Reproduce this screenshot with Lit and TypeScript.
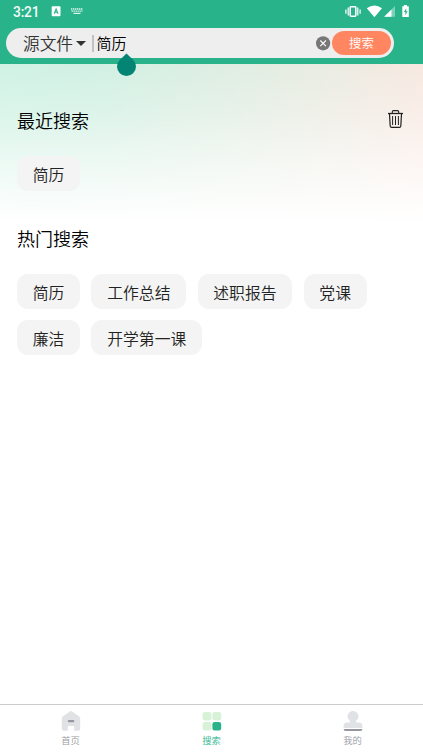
import { LitElement, html, css } from "lit";
import { customElement, property } from "lit/decorators.js";

@customElement("tag-list")
class TagList extends LitElement {
  @property({ attribute: false }) items: string[] = [];

  static styles = css`
    :host { display: flex; flex-wrap: wrap; gap: 11px 11.25px; }
    .tag {
      height: 35px; line-height: 37px; padding: 0 15.8px; border-radius: 11px;
      background: #f4f4f4; color: #222; font-size: 15.8px; white-space: nowrap;
    }
  `;

  render() {
    return html`${this.items.map((t) => html`<div class="tag">${t}</div>`)}`;
  }
}

@customElement("app-root")
class AppRoot extends LitElement {
  static styles = css`
    :host {
      display: flex; flex-direction: column; box-sizing: border-box;
      width: 100%; height: 752px; overflow: hidden; background: #fff; color: #000;
      font-family: "Noto Sans CJK SC", sans-serif; font-weight: 350;
    }
    svg { display: block; flex: none; }
    .top { height: 64px; flex: none; background: #29b38a; }
    .status { height: 28px; display: flex; padding: 0 0 0 13px; box-sizing: border-box; }
    .time { font: 500 13.8px/24px Roboto, sans-serif; color: #f2fbf8; width: 38px; letter-spacing: -0.2px; }
    .grow { flex: 1; }
    .bar {
      position: relative; box-sizing: border-box; width: 388px; height: 30px;
      margin-left: 6px; border-radius: 15px; background: #eee;
      display: flex; align-items: center; padding: 0 3px 0 17px;
    }
    .kind { font-size: 16.7px; line-height: 30px; color: #333; width: 53px; white-space: nowrap; }
    .sep { width: 1.5px; height: 17px; background: #c2c2c2; margin: 1px 3px 0 6px; }
    .query { font-size: 15px; line-height: 30px; flex: 1; }
    .go {
      width: 59px; height: 24px; border-radius: 12px; background: #ff8661; color: #fff;
      font-size: 12.4px; line-height: 24px; text-align: center; margin-left: 1px;
    }
    .handle { position: absolute; left: 110px; top: 25px; }
    .body {
      flex: 1; padding: 0 17px;
      background:
        linear-gradient(to bottom, rgba(255,255,255,0) 0, rgba(255,255,255,.25) 50px, rgba(255,255,255,.65) 105px, #fff 158px),
        linear-gradient(102deg, #cff2e4 0%, #d2f0e3 25%, #e9ece2 70%, #f9e8e1 97%);
      background-size: 100% 100%, 100% 159px;
      background-repeat: no-repeat;
    }
    .head { display: flex; justify-content: space-between; align-items: center; height: 28px; font-size: 18px; line-height: 28px; }
    .head svg { margin-bottom: 2px; }
    .recent { padding: 42px 0 22px; }
    .hot { padding: 33px 0 22px; }
    .tabs {
      height: 48px; box-sizing: border-box; flex: none; display: grid;
      grid-template-columns: repeat(3, 1fr); border-top: 1px solid #ccc; background: #fff;
    }
    .tab { display: flex; flex-direction: column; align-items: center; padding-top: 5px; font-size: 9.3px; line-height: 14px; color: #9698a0; }
    .tab svg { margin-bottom: 1px; }
    .active { color: #29b38a; }
  `;

  render() {
    return html`
      <div class="top">
        <div class="status">
          <div class="time">3:21</div>
          <svg width="40" height="24" viewBox="0 0 40 24">
            <rect x=".7" y="6.3" width="8.8" height="10" rx="1" fill="#fff" />
            <path d="M3.2 13.8 5.1 9l1.9 4.8M4 12.3h2.3" fill="none" stroke="#29b38a" stroke-width="1.1" />
            <path d="M20 9h11.5M20.5 11.1h11" stroke="#e0f5ee" stroke-width="1.4" stroke-dasharray="1.4 .6" />
            <path d="M22.5 13.4h7" stroke="#e0f5ee" stroke-width="1.2" />
          </svg>
          <div class="grow"></div>
          <svg width="80" height="24" viewBox="343 0 80 24" fill="#fff">
            <rect x="350.2" y="6.7" width="5.6" height="9.6" rx=".7" fill="none" stroke="#fff" stroke-width="1.5" />
            <path d="M348.2 7.5v8M345.9 9.5v4.2M357.8 7.5v8M360.1 9.5v4.2" stroke="#fff" stroke-width="1.2" />
            <path d="M366.8 8.2Q374.3 2.8 382 8.2L374.4 17.3Z" />
            <path d="M384.2 16.8 395 6v10.8Z" opacity=".4" />
            <path d="M384.2 16.8 391.5 9.5v7.3Z" />
            <path d="M402.3 6.3h1.6V5h3v1.3h1.9v10.8h-6.5Z" />
            <path d="m406.2 8.2-2.3 3.9h1.5v3.1l2.2-4h-1.4Z" fill="#29b38a" />
          </svg>
        </div>
        <div class="bar">
          <div class="kind">源文件</div>
          <svg width="10" height="6" viewBox="0 0 10 6"><path d="M0 1h10L5 6Z" fill="#333" /></svg>
          <div class="sep"></div>
          <div class="query">简历</div>
          <svg width="15" height="15" viewBox="0 0 15 15">
            <circle cx="7.1" cy="7.3" r="7.1" fill="#777" />
            <path d="m4.3 4.5 5.6 5.6m0-5.6-5.6 5.6" stroke="#fff" stroke-width="1.1" />
          </svg>
          <div class="go">搜索</div>
          <svg class="handle" width="21" height="24" viewBox="0 0 21 24">
            <path d="M10.5.4 17.3 6.9A9.5 9.5 0 1 1 3.7 6.9Z" fill="#048574" />
          </svg>
        </div>
      </div>
      <div class="body">
        <div class="head recent">
          <span>最近搜索</span>
          <svg width="21" height="22" viewBox="385 108 21 22" fill="none" stroke="#222">
            <path d="M388 113.5h15" stroke-width="1.3" />
            <path d="M392.3 113v-1.2q0-1.2 1.2-1.2h4q1.2 0 1.2 1.2v1.2" stroke-width="1.1" />
            <path d="M389.5 114l.7 12q.1 1.4 1.5 1.4h7.6q1.4 0 1.5-1.4l.7-12" stroke-width="1.2" />
            <path d="M392.6 116v9M395.5 116v9M398.4 116v9" stroke-width="1" />
          </svg>
        </div>
        <tag-list .items=${["简历"]}></tag-list>
        <div class="head hot"><span>热门搜索</span></div>
        <tag-list .items=${["简历", "工作总结", "述职报告", "党课", "廉洁", "开学第一课"]}></tag-list>
      </div>
      <div class="tabs">
        <div class="tab">
          <svg width="20" height="22" viewBox="0 0 20 22">
            <path d="M8.8 1.4q1.2-.8 2.4 0l7 5q1 .8 1 2v10.2q0 2.2-2 2.2h-3.9v-3.5q0-1.3-1.3-1.3h-4q-1.3 0-1.3 1.3v3.5H2.8q-2 0-2-2.2V8.4q0-1.2 1-2Z" fill="#e1e2e6" />
            <rect x="6.8" y="10" width="6.5" height="2.2" rx="1" fill="#9496a0" />
          </svg>
          首页
        </div>
        <div class="tab active">
          <svg width="20" height="22" viewBox="0 0 20 22">
            <g fill="#d8f2d8">
              <rect x=".6" y="2" width="8.8" height="8.6" rx="2.3" />
              <rect x="10.4" y="2" width="8.8" height="8.6" rx="2.3" />
              <rect x=".6" y="12" width="8.8" height="8.6" rx="2.3" />
            </g>
            <rect x="10.4" y="12" width="8.8" height="8.6" rx="2.3" fill="#29b38a" />
          </svg>
          搜索
        </div>
        <div class="tab">
          <svg width="20" height="22" viewBox="0 0 20 22">
            <path d="M10 1a5.4 5.4 0 0 1 3 9.9q-.6 1.6 1.2 1.6h2q3.2 0 3.2 4v1.4H.6v-1.4q0-4 3.2-4h2q1.8 0 1.2-1.6A5.4 5.4 0 0 1 10 1Z" fill="#e1e2e6" />
            <path d="M.6 18.9h18.8q0 2-2 2H2.6q-2 0-2-2Z" fill="#9496a0" />
          </svg>
          我的
        </div>
      </div>
    `;
  }
}
